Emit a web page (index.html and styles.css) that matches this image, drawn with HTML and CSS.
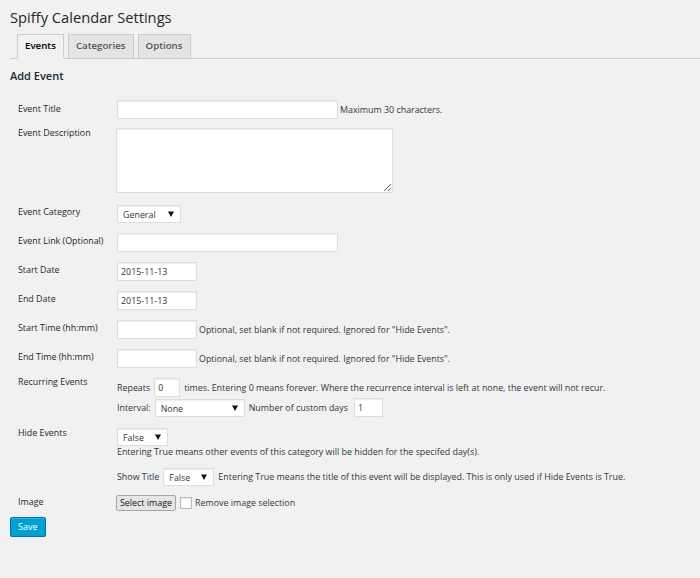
FILE: index.html
```html
<!DOCTYPE html>
<html lang="en">
<head>
<meta charset="utf-8">
<title>Spiffy Calendar Settings</title>
<link rel="stylesheet" href="styles.css">
</head>
<body>
<div class="wrap">
  <h1 class="page-title">Spiffy Calendar Settings</h1>
  <nav class="tabs">
    <a class="tab tab-active" href="#">Events</a>
    <a class="tab" href="#">Categories</a>
    <a class="tab" href="#">Options</a>
  </nav>
  <h3 class="section-title">Add Event</h3>
  <form class="form">
    <div class="row row-title">
      <label class="label lbl-3">Event Title</label>
      <div class="line gap2">
        <input class="input w-long" type="text">
        <span class="hint">Maximum 30 characters.</span>
      </div>
    </div>
    <div class="row row-desc">
      <label class="label lbl-n1">Event Description</label>
      <div class="field"><textarea class="textarea"></textarea></div>
    </div>
    <div class="row">
      <label class="label lbl-1">Event Category</label>
      <div class="line">
        <span class="select-wrap w-cat"><select class="select"><option>General</option></select><svg class="arrow" width="6" height="6" viewBox="0 0 6 6"><polygon points="0,0.5 6,0.5 3,6"/></svg></span>
      </div>
    </div>
    <div class="row">
      <label class="label">Event Link (Optional)</label>
      <div class="line"><input class="input w-long" type="text"></div>
    </div>
    <div class="row">
      <label class="label">Start Date</label>
      <div class="line"><input class="input w-date" type="text" value="2015-11-13"></div>
    </div>
    <div class="row">
      <label class="label">End Date</label>
      <div class="line"><input class="input w-date" type="text" value="2015-11-13"></div>
    </div>
    <div class="row">
      <label class="label">Start Time (hh:mm)</label>
      <div class="line gap2">
        <input class="input w-date" type="text">
        <span class="hint">Optional, set blank if not required. Ignored for "Hide Events".</span>
      </div>
    </div>
    <div class="row">
      <label class="label">End Time (hh:mm)</label>
      <div class="line gap2">
        <input class="input w-date" type="text">
        <span class="hint">Optional, set blank if not required. Ignored for "Hide Events".</span>
      </div>
    </div>
    <div class="row row-recur">
      <label class="label lbl-n2">Recurring Events</label>
      <div class="field">
        <div class="line gap4">
          <span class="hint">Repeats</span>
          <input class="input w-rep" type="text" value="0">
          <span class="hint">times. Entering 0 means forever. Where the recurrence interval is left at none, the event will not recur.</span>
        </div>
        <div class="line gap4 line-interval">
          <span class="hint">Interval:</span>
          <span class="select-wrap w-int"><select class="select"><option>None</option></select><svg class="arrow" width="6" height="6" viewBox="0 0 6 6"><polygon points="0,0.5 6,0.5 3,6"/></svg></span>
          <span class="hint">Number of custom days</span>
          <input class="input w-days" type="text" value="1">
        </div>
      </div>
    </div>
    <div class="row row-hide">
      <label class="label lbl-n1">Hide Events</label>
      <div class="field">
        <span class="select-wrap w-bool"><select class="select"><option>False</option></select><svg class="arrow" width="6" height="6" viewBox="0 0 6 6"><polygon points="0,0.5 6,0.5 3,6"/></svg></span>
        <p class="hint block">Entering True means other events of this category will be hidden for the specifed day(s).</p>
        <div class="line gap4 line-show">
          <span class="hint">Show Title</span>
          <span class="select-wrap w-bool"><select class="select"><option>False</option></select><svg class="arrow" width="6" height="6" viewBox="0 0 6 6"><polygon points="0,0.5 6,0.5 3,6"/></svg></span>
          <span class="hint">Entering True means the title of this event will be displayed. This is only used if Hide Events is True.</span>
        </div>
      </div>
    </div>
    <div class="row row-image">
      <label class="label lbl-1">Image</label>
      <div class="line gap3">
        <button class="btn" type="button">Select image</button>
        <span class="checkbox"></span>
        <span class="hint">Remove image selection</span>
      </div>
    </div>
    <button class="btn-primary" type="submit">Save</button>
  </form>
</div>
</body>
</html>
```

FILE: styles.css
```css
html, body {
  margin: 0;
  padding: 0;
  background: #f1f1f1;
}
body {
  font-family: "Open Sans", "Liberation Sans", sans-serif;
  color: #23282d;
  font-size: 8.9px;
}
.wrap {
  padding-left: 10px;
}
.page-title {
  margin: 7px 0 0;
  font-size: 14.7px;
  line-height: 20px;
  font-weight: 400;
  color: #23282d;
}
.tabs {
  display: flex;
  align-items: flex-start;
  gap: 4px;
  margin-top: 7px;
  padding-left: 7px;
  border-bottom: 1px solid #ccc;
}
.tab {
  display: block;
  border: 1px solid #ccc;
  border-bottom: none;
  background: #e4e4e4;
  color: #555;
  font-size: 9.7px;
  font-weight: 600;
  line-height: 22px;
  padding: 0 7px 1px;
  text-decoration: none;
}
.tab-active {
  background: #f1f1f1;
  color: #000;
  border-bottom: 1px solid #f1f1f1;
  margin-bottom: -1px;
}
.section-title {
  margin: 9px 0 0;
  font-size: 11px;
  line-height: 15px;
  font-weight: 600;
  color: #23282d;
}
.form {
  margin: 17px 0 0;
}
.row {
  display: grid;
  grid-template-columns: 107px 1fr;
  align-items: start;
  margin-bottom: 10px;
}
.row-title { margin-bottom: 9px; }
.row-desc { margin-bottom: 12px; }
.row-recur { margin-bottom: 11px; }
.row-hide { margin-bottom: 9px; }
.row-image { margin-bottom: 6px; }
.label {
  display: block;
  padding-left: 8px;
  line-height: 12px;
  margin-top: 2px;
  color: #23282d;
}
.lbl-3 { margin-top: 3px; }
.lbl-1 { margin-top: 1px; }
.lbl-n1 { margin-top: -1px; }
.lbl-n2 { margin-top: -2px; }
.field {
  display: flex;
  flex-direction: column;
  align-items: flex-start;
}
.line {
  display: flex;
  align-items: center;
  white-space: nowrap;
}
.gap2 { gap: 2px; }
.gap3 { gap: 4px; }
.gap4 { gap: 4px; }
.line-interval { margin-top: 1px; }
.line-interval .w-days { margin-left: 2px; }
.line-show { margin-top: 10px; }
.hint {
  line-height: 12px;
  color: #32373c;
}
.block {
  margin: 0;
  display: block;
}
.input {
  box-sizing: border-box;
  height: 19px;
  margin: 0;
  padding: 0 3px;
  border: 1px solid #ddd;
  background: #fff;
  box-shadow: inset 0 1px 2px rgba(0,0,0,.07);
  font-family: "Open Sans", "Liberation Sans", sans-serif;
  font-size: 8.9px;
  color: #32373c;
  outline: none;
}
.w-long { width: 221px; }
.w-date { width: 80px; }
.w-rep { width: 26px; }
.w-days { width: 29px; }
.textarea {
  display: block;
  box-sizing: border-box;
  width: 277px;
  height: 65px;
  margin: 0 0 0 -1px;
  padding: 2px 3px;
  border: 1px solid #ddd;
  background: #fff;
  box-shadow: inset 0 1px 2px rgba(0,0,0,.07);
  font-family: "Open Sans", "Liberation Sans", sans-serif;
  font-size: 8.9px;
  outline: none;
}
.select-wrap {
  position: relative;
  display: inline-block;
  height: 18px;
}
.w-cat { width: 64px; }
.w-int { width: 90px; }
.w-bool { width: 51px; }
.select {
  -webkit-appearance: none;
  appearance: none;
  box-sizing: border-box;
  display: block;
  width: 100%;
  height: 18px;
  margin: 0;
  padding: 1px 0 0 5px;
  border: 1px solid #ddd;
  border-radius: 0;
  background: #fff;
  box-shadow: inset 0 1px 2px rgba(0,0,0,.07);
  font-family: "Open Sans", "Liberation Sans", sans-serif;
  font-size: 8.9px;
  color: #32373c;
  outline: none;
}
.arrow {
  position: absolute;
  right: 7px;
  top: 6px;
  fill: #111;
  pointer-events: none;
}
.btn {
  box-sizing: border-box;
  height: 16px;
  margin: 0 0 0 -1px;
  padding: 0 3px;
  border: 1px solid #a5a5a5;
  border-radius: 2px;
  background: #e6e6e6;
  font-family: "Open Sans", "Liberation Sans", sans-serif;
  font-size: 8.9px;
  line-height: 12px;
  color: #111;
}
.checkbox {
  box-sizing: border-box;
  display: inline-block;
  width: 12px;
  height: 12px;
  border: 1px solid #b4b9be;
  background: #fff;
  box-shadow: inset 0 1px 2px rgba(0,0,0,.1);
  margin-right: -1px;
}
.btn-primary {
  box-sizing: border-box;
  height: 20px;
  margin: 0;
  padding: 0 7px;
  border: 1px solid #0073aa;
  border-radius: 2px;
  background: #00a0d2;
  box-shadow: inset 0 1px 0 rgba(120,200,230,.5), 0 1px 0 rgba(0,0,0,.15);
  font-family: "Open Sans", "Liberation Sans", sans-serif;
  font-size: 9px;
  line-height: 18px;
  color: #fff;
}
```
